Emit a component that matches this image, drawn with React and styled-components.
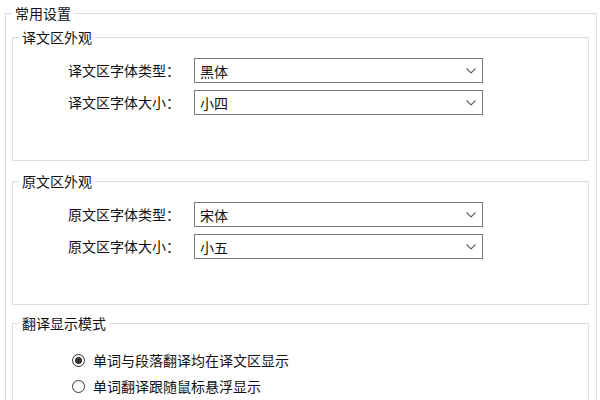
import styled, { createGlobalStyle } from 'styled-components';

const GlobalStyle = createGlobalStyle`
  html, body {
    margin: 0;
    padding: 0;
    background: #ffffff;
    overflow: hidden;
  }
  body {
    width: 600px;
    height: 400px;
    font-family: 'Noto Sans CJK SC', 'Noto Sans', sans-serif;
    font-size: 14px;
    line-height: 20px;
    color: #111111;
  }
`;

const Group = styled.fieldset`
  margin: ${(props) => props.margin || '0'};
  padding: ${(props) => props.padding || '0 6px 0 6px'};
  border: 1px solid #dcdcdc;
  min-width: 0;
  box-sizing: border-box;
`;

const Legend = styled.legend`
  padding: 0 3px;
  font-size: 14px;
  line-height: 20px;
  height: 20px;
  color: #111111;
`;

const FormGrid = styled.div`
  display: grid;
  grid-template-columns: 161px 289px;
  column-gap: 14px;
  row-gap: 7px;
  padding: 11px 0 45px 0;
`;

const Label = styled.div`
  text-align: right;
  line-height: 25px;
  white-space: nowrap;
`;

const SelectBox = styled.div`
  height: 25px;
  box-sizing: border-box;
  border: 1px solid #7a7a7a;
  background: #ffffff;
  display: flex;
  align-items: center;
  justify-content: space-between;
  padding: 0 6px 0 5px;
`;

const SelectText = styled.span`
  line-height: 20px;
`;

const RadioList = styled.div`
  display: flex;
  flex-direction: column;
  padding: 14px 0 20px 53px;
`;

const RadioRow = styled.div`
  display: flex;
  align-items: center;
  gap: 8px;
  height: 26px;
  white-space: nowrap;
`;

const RadioCircle = styled.span`
  width: 13px;
  height: 13px;
  box-sizing: border-box;
  border: 1px solid #333333;
  border-radius: 50%;
  display: flex;
  align-items: center;
  justify-content: center;
  background: #ffffff;

  &::after {
    content: '';
    width: 7px;
    height: 7px;
    border-radius: 50%;
    background: ${(props) => (props.checked ? '#333333' : 'transparent')};
  }
`;

const Chevron = () => (
  <svg width="10" height="6" viewBox="0 0 10 6">
    <path d="M0.5 0.5 L5 5 L9.5 0.5" fill="none" stroke="#5f5f5f" strokeWidth="1.1" />
  </svg>
);

const Select = ({ value }) => (
  <SelectBox>
    <SelectText>{value}</SelectText>
    <Chevron />
  </SelectBox>
);

const FontGroup = ({ title, prefix, type, size, margin }) => (
  <Group margin={margin}>
    <Legend>{title}</Legend>
    <FormGrid>
      <Label>{prefix}字体类型：</Label>
      <Select value={type} />
      <Label>{prefix}字体大小：</Label>
      <Select value={size} />
    </FormGrid>
  </Group>
);

export default function App() {
  return (
    <>
      <GlobalStyle />
      <Group margin="3px 3px 0 5px" padding="4px 7px 0 6px">
        <Legend>常用设置</Legend>
        <FontGroup title="译文区外观" prefix="译文区" type="黑体" size="小四" />
        <FontGroup title="原文区外观" prefix="原文区" type="宋体" size="小五" margin="10px 0 0 0" />
        <Group margin="8px 0 0 0">
          <Legend>翻译显示模式</Legend>
          <RadioList>
            <RadioRow>
              <RadioCircle checked />
              <span>单词与段落翻译均在译文区显示</span>
            </RadioRow>
            <RadioRow>
              <RadioCircle />
              <span>单词翻译跟随鼠标悬浮显示</span>
            </RadioRow>
          </RadioList>
        </Group>
      </Group>
    </>
  );
}
